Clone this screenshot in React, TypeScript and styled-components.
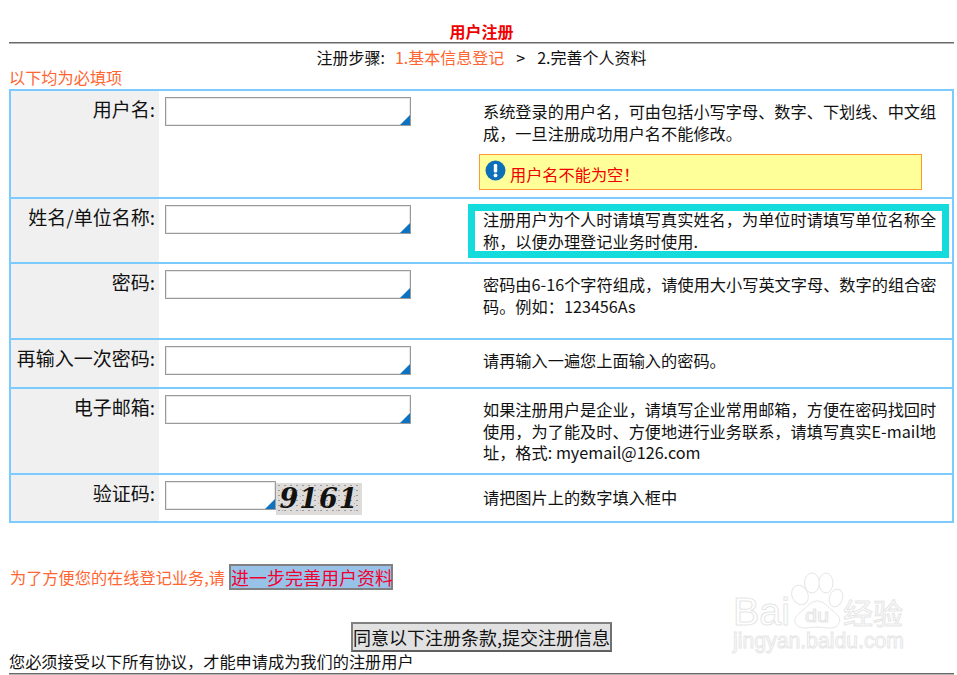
import { FC } from "react";
import styled, { createGlobalStyle } from "styled-components";

type Field = {
  label: string;
  help: string[];
  height: number;
  short?: boolean;
  error?: string;
  marked?: boolean;
};

const fields: Field[] = [
  {
    label: "用户名:",
    help: ["系统登录的用户名，可由包括小写字母、数字、下划线、中文组", "成，一旦注册成功用户名不能修改。"],
    height: 106,
    error: "用户名不能为空！",
  },
  {
    label: "姓名/单位名称:",
    help: ["注册用户为个人时请填写真实姓名，为单位时请填写单位名称全", "称，以便办理登记业务时使用."],
    height: 65,
    marked: true,
  },
  {
    label: "密码:",
    help: ["密码由6-16个字符组成，请使用大小写英文字母、数字的组合密", "码。例如：123456As"],
    height: 76,
  },
  {
    label: "再输入一次密码:",
    help: ["请再输入一遍您上面输入的密码。"],
    height: 49,
  },
  {
    label: "电子邮箱:",
    help: [
      "如果注册用户是企业，请填写企业常用邮箱，方便在密码找回时",
      "使用，为了能及时、方便地进行业务联系，请填写真实E-mail地",
      "址，格式: myemail@126.com",
    ],
    height: 86,
  },
  {
    label: "验证码:",
    help: ["请把图片上的数字填入框中"],
    height: 48,
    short: true,
  },
];

const GlobalStyle = createGlobalStyle`
  html, body {
    margin: 0;
    padding: 0;
    background: #fff;
  }
  body {
    font-family: "Noto Sans CJK SC", "Noto Sans", sans-serif;
    font-size: 16.2px;
    color: #111;
    overflow: hidden;
    text-spacing-trim: space-all;
  }
`;

const Page = styled.div`
  position: relative;
  width: 957px;
  height: 675px;
  padding: 21px 3px 0 9px;
  box-sizing: border-box;
  overflow: hidden;
`;

const Title = styled.div`
  height: 21px;
  line-height: 21px;
  text-align: center;
  font-size: 16px;
  font-weight: 700;
  color: #f00000;
`;

const Rule = styled.div`
  height: 2px;
  background: linear-gradient(#6a6a6a 50%, #b4b4b4 50%);
`;

const Steps = styled.div`
  display: flex;
  justify-content: center;
  height: 26px;
  line-height: 26px;
  font-size: 16px;
`;

const Step = styled.span<{ $on?: boolean; $gap?: number }>`
  margin-left: ${({ $gap }) => $gap ?? 0}px;
  color: ${({ $on }) => ($on ? "#ff6633" : "#111")};
`;

const Required = styled.div`
  height: 19px;
  line-height: 14px;
  color: #ff6633;
`;

const Table = styled.div`
  border: 2px solid #7ccbff;
  box-sizing: border-box;
  width: 945px;
`;

const Row = styled.div<{ $h: number }>`
  display: grid;
  grid-template-columns: 148px 1fr;
  box-sizing: border-box;
  height: ${({ $h }) => $h}px;
  & + & {
    border-top: 2px solid #7ccbff;
  }
`;

const Label = styled.div`
  background: #f0f0f0;
  text-align: right;
  padding: 4px 4px 0 0;
  font-size: 19px;
  line-height: 28px;
  white-space: nowrap;
`;

const Body = styled.div`
  position: relative;
  display: grid;
  grid-template-columns: 309px 1fr;
`;

const InputCell = styled.div`
  display: flex;
  align-items: flex-start;
  padding: 6px 0 0 6px;
`;

const InputBox = styled.div<{ $short?: boolean }>`
  position: relative;
  width: ${({ $short }) => ($short ? 111 : 246)}px;
  height: 29px;
  box-sizing: border-box;
  border: 1px solid #9a9a9a;
  box-shadow: inset 0 0 0 1px #e6e6e6;
  background: #fff;
  &::after {
    content: "";
    position: absolute;
    right: 0;
    bottom: 0;
    border-style: solid;
    border-width: 0 0 10px 10px;
    border-color: transparent transparent #0d72c0 transparent;
  }
`;

const Captcha = styled.div`
  width: 86px;
  height: 32px;
  margin-top: 2px;
  background-color: #dedcda;
  background-image: radial-gradient(#9a9a9a 0.5px, transparent 0.8px),
    radial-gradient(#b9a4b2 0.5px, transparent 0.8px);
  background-size: 6px 5px, 9px 7px;
  background-position: 0 0, 2px 3px;
  color: #111;
  font: italic 700 27px/31px "DejaVu Serif", serif;
  letter-spacing: 1px;
  text-align: center;
  overflow: hidden;
`;

const Help = styled.div<{ $low?: boolean }>`
  padding: ${({ $low }) => ($low ? 12 : 10)}px 0 0 15px;
  line-height: 21.5px;
  white-space: nowrap;
`;

const ErrorBox = styled.div`
  display: flex;
  align-items: flex-start;
  gap: 4px;
  width: 443px;
  height: 36px;
  margin: 10px 0 0 11px;
  padding: 5px 0 0 5px;
  box-sizing: border-box;
  border: 1px solid #ff9933;
  background: #ffff99;
  color: #f00000;
  line-height: 28px;
`;

const Mark = styled.div`
  position: absolute;
  left: 309px;
  top: 5px;
  width: 481px;
  height: 54px;
  box-sizing: border-box;
  border: 7px solid #15dcdc;
  pointer-events: none;
`;

const Next = styled.div`
  display: flex;
  align-items: center;
  height: 26px;
  margin: 41px 0 0 1px;
  color: #ff6633;
`;

const NextLink = styled.span`
  display: block;
  margin-left: 4px;
  width: 164px;
  height: 26px;
  box-sizing: border-box;
  border: 2px solid #808080;
  background: #99c2e8;
  color: #f00030;
  font-size: 18px;
  line-height: 22px;
  text-align: center;
  white-space: nowrap;
`;

const Submit = styled.button`
  display: block;
  width: 261px;
  height: 30px;
  margin: 32px 0 0 342px;
  padding: 0;
  box-sizing: border-box;
  border: 2px solid;
  border-color: #808080 #707070 #606060 #808080;
  background: #e1e1e1;
  color: #111;
  font-family: inherit;
  font-size: 18px;
  line-height: 26px;
  white-space: nowrap;
`;

const Agree = styled.div`
  height: 21px;
  line-height: 18px;
`;

const Watermark = styled.svg`
  position: absolute;
  left: 730px;
  top: 570px;
  pointer-events: none;
`;

const WaterText = styled.text<{ $size: number }>`
  font-family: "Liberation Sans", sans-serif;
  font-size: ${({ $size }) => $size}px;
  fill: #fff;
  stroke: #e6e6e6;
  stroke-width: 1;
`;

const WaterCjk = styled(WaterText)`
  font-family: "Noto Sans CJK SC", sans-serif;
`;

const InfoIcon: FC = () => (
  <svg width="21" height="21" viewBox="0 0 21 21">
    <circle cx="10.5" cy="10.5" r="10" fill="#0d6fb8" />
    <rect x="8.8" y="4" width="3.4" height="8.5" rx="1.2" fill="#fff" />
    <circle cx="10.5" cy="15.4" r="1.9" fill="#fff" />
  </svg>
);

const BaiduMark: FC = () => (
  <Watermark width="180" height="90" viewBox="0 0 180 90" fill="none">
    <WaterText $size={38} x="3" y="55" textLength="57" lengthAdjust="spacingAndGlyphs">
      Bai
    </WaterText>
    <g fill="#fff" stroke="#e6e6e6">
      <ellipse cx="70" cy="25" rx="8" ry="10" transform="rotate(-25 70 25)" />
      <ellipse cx="82" cy="13" rx="7.5" ry="10" />
      <ellipse cx="96" cy="13" rx="7" ry="10" />
      <ellipse cx="106" cy="28" rx="6.5" ry="9" transform="rotate(20 106 28)" />
      <path d="M87 31c7 0 11 6 16 10 6 5 8 8 6 12-2 5-7 5-11 5-4 0-7-1-11-1s-7 1-11 1c-5 0-10-1-11-6-1-4 2-7 7-11 5-4 9-10 15-10z" />
    </g>
    <WaterText $size={18} x="75" y="52" textLength="24" lengthAdjust="spacingAndGlyphs">
      du
    </WaterText>
    <WaterCjk $size={29} x="113" y="55" textLength="60" lengthAdjust="spacingAndGlyphs">
      经验
    </WaterCjk>
    <WaterText $size={22} x="3" y="78" textLength="171" lengthAdjust="spacingAndGlyphs">
      jingyan.baidu.com
    </WaterText>
  </Watermark>
);

const App: FC = () => {
  return (
    <>
      <GlobalStyle />
      <Page>
        <Title>用户注册</Title>
        <Rule />
        <Steps>
          <Step>注册步骤:</Step>
          <Step $on $gap={10}>
            1.基本信息登记
          </Step>
          <Step $gap={12}>&gt;</Step>
          <Step $gap={12}>2.完善个人资料</Step>
        </Steps>
        <Required>以下均为必填项</Required>
        <Table>
          {fields.map((field) => (
            <Row key={field.label} $h={field.height}>
              <Label>{field.label}</Label>
              <Body>
                <InputCell>
                  <InputBox $short={field.short} />
                  {field.short && <Captcha>9161</Captcha>}
                </InputCell>
                <div>
                  <Help $low={field.short}>
                    {field.help.map((line) => (
                      <div key={line}>{line}</div>
                    ))}
                  </Help>
                  {field.error && (
                    <ErrorBox>
                      <InfoIcon />
                      {field.error}
                    </ErrorBox>
                  )}
                </div>
                {field.marked && <Mark />}
              </Body>
            </Row>
          ))}
        </Table>
        <Next>
          为了方便您的在线登记业务,请
          <NextLink>进一步完善用户资料</NextLink>
        </Next>
        <Submit type="button">同意以下注册条款,提交注册信息</Submit>
        <Agree>您必须接受以下所有协议，才能申请成为我们的注册用户</Agree>
        <Rule />
        <BaiduMark />
      </Page>
    </>
  );
};

export default App;
